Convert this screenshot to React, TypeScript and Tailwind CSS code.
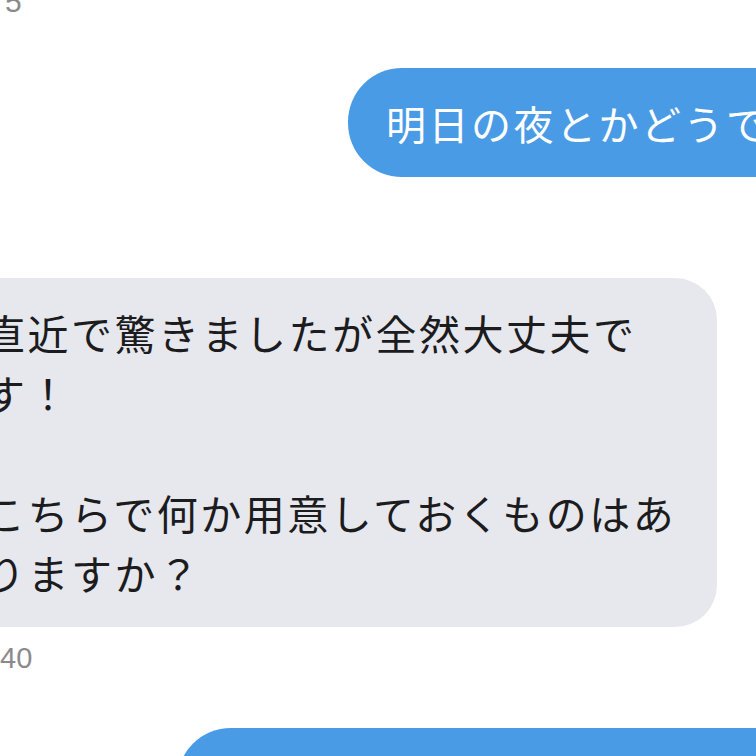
const reply = [
  '直近で驚きましたが全然大丈夫で',
  'す！',
  '',
  'こちらで何か用意しておくものはあ',
  'りますか？',
];

export default function App() {
  return (
    <div className="w-[756px] h-[756px] overflow-hidden bg-white flex flex-col">
      {/* timestamp, cut off at the top */}
      <div className="mt-[-15px] pl-[5px] font-['Liberation_Sans',Arial,sans-serif] text-[30px] leading-[34px] text-[#8a8a8e]">
        5
      </div>

      {/* outgoing */}
      <div className="mt-[49px] ml-[348px] w-[560px] shrink-0 h-[109px] rounded-[54px] bg-[#4a9be6] flex items-center pl-[38px] font-['Noto_Sans_CJK_JP','Noto_Sans',sans-serif] text-white text-[40px] tracking-[2.5px] whitespace-nowrap">
        明日の夜とかどうですか？
      </div>

      {/* incoming */}
      <div className="mt-[101px] ml-[-60px] w-[777px] shrink-0 rounded-[42px] bg-[#e6e8ed] pl-[44px] pt-[24px] pb-[25px] font-['Noto_Sans_CJK_JP','Noto_Sans',sans-serif] text-[#1c1c1e] text-[41px] tracking-[2.5px] whitespace-nowrap">
        {reply.map((line, i) => (
          <div key={i} className="h-[60px] leading-[60px]">
            {line}
          </div>
        ))}
      </div>

      <div className="mt-[14px] font-['Liberation_Sans',Arial,sans-serif] text-[29px] leading-[34px] text-[#8a8a8e]">
        40
      </div>

      {/* next outgoing, cut off at the bottom */}
      <div className="mt-[53px] ml-[177px] w-[700px] shrink-0 h-[110px] rounded-[54px] bg-[#4a9be6]" />
    </div>
  );
}
